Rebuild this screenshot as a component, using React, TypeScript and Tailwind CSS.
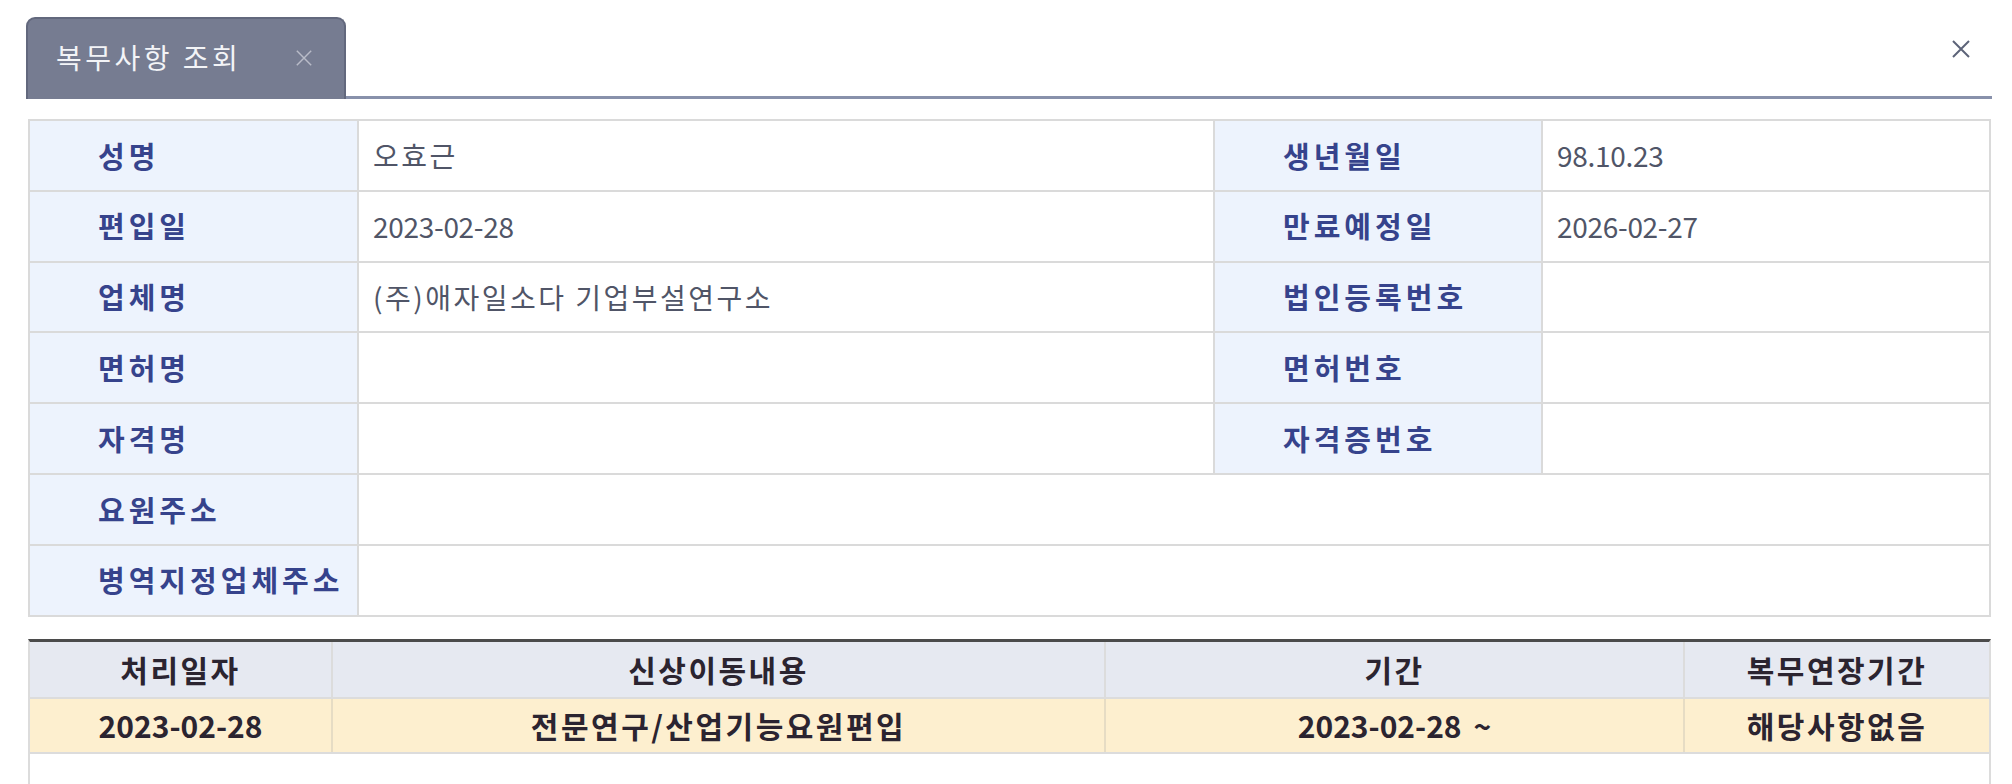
import React from "react";

const labelCls =
  "bg-[#edf3fd] flex items-center pl-[68px] text-[29px] font-bold tracking-[4px] text-[#36438c] whitespace-nowrap";
const valueCls =
  "bg-white flex items-center pl-[14px] text-[28px] text-[#505567] whitespace-nowrap";

function XIcon({ size, color, stroke }: { size: number; color: string; stroke: number }) {
  return (
    <svg width={size} height={size} viewBox="0 0 20 20" fill="none">
      <path d="M2 2 L18 18 M18 2 L2 18" stroke={color} strokeWidth={stroke} strokeLinecap="butt" />
    </svg>
  );
}

function Val({ text }: { text: string }) {
  const hasHangul = /[\uac00-\ud7a3]/.test(text);
  return <span className={hasHangul ? "tracking-[2.5px]" : "tracking-[-0.3px]"}>{text}</span>;
}

export default function App() {
  const rows: [string, string, string | null, string | null][] = [
    ["성명", "오효근", "생년월일", "98.10.23"],
    ["편입일", "2023-02-28", "만료예정일", "2026-02-27"],
    ["업체명", "(주)애자일소다 기업부설연구소", "법인등록번호", ""],
    ["면허명", "", "면허번호", ""],
    ["자격명", "", "자격증번호", ""],
    ["요원주소", "", null, null],
    ["병역지정업체주소", "", null, null],
  ];

  const hdr = "flex items-center justify-center tracking-[2.5px]";
  const cell = "flex items-center justify-center";

  return (
    <div
      className="w-[2012px] h-[784px] bg-white overflow-hidden flex flex-col"
      style={{ fontFamily: '"Noto Sans CJK KR", "Noto Sans", sans-serif' }}
    >
      {/* header with tab */}
      <div className="flex items-end pl-[26px] pr-[20px] pt-[17px] h-[99px] shrink-0">
        <div className="w-[320px] h-[82px] bg-[#767c91] border-2 border-b-0 border-[#62687d] rounded-t-[9px] flex items-center pl-[28px] pb-[4px]">
          <span className="text-[28px] tracking-[3.5px] text-[#f3f4f7]">복무사항 조회</span>
          <span className="ml-[54px] mt-[2px]">
            <XIcon size={18} color="#b9bcc8" stroke={1.6} />
          </span>
        </div>
        <div className="flex-1 h-full border-b-[3px] border-[#8891ab] flex items-center justify-end pr-[21px] pb-[16px]">
          <XIcon size={20} color="#5c6378" stroke={2} />
        </div>
      </div>

      {/* info table */}
      <div className="ml-[28px] mr-[21px] mt-[20px] bg-[#dadada] p-[2px] grid grid-cols-[327px_854px_326px_minmax(0,1fr)] gap-[2px] auto-rows-[68.8px] shrink-0">
        {rows.map(([l1, v1, l2, v2], i) =>
          l2 === null ? (
            <React.Fragment key={i}>
              <div className={labelCls}>{l1}</div>
              <div className={valueCls + " col-span-3"}>
                <Val text={v1} />
              </div>
            </React.Fragment>
          ) : (
            <React.Fragment key={i}>
              <div className={labelCls}>{l1}</div>
              <div className={valueCls}>
                <Val text={v1} />
              </div>
              <div className={labelCls + " pl-[66px]"}>{l2}</div>
              <div className={valueCls}>
                <Val text={v2 ?? ""} />
              </div>
            </React.Fragment>
          )
        )}
      </div>

      {/* history table */}
      <div className="ml-[28px] mr-[21px] mt-[22px] flex-1 border-t-[3px] border-t-[#4b4b4b] border-x-2 border-x-[#dcdcdc] flex flex-col">
        <div className="grid grid-cols-[303px_773px_579px_minmax(0,1fr)] h-[57px] bg-[#e6e9f1] border-b-2 border-[#dcdcdc] text-[30px] font-bold text-[#2b2430]">
          <div className={hdr + " border-r-2 border-[#dcdcdc]"}>처리일자</div>
          <div className={hdr + " border-r-2 border-[#dcdcdc]"}>신상이동내용</div>
          <div className={hdr + " border-r-2 border-[#dcdcdc]"}>기간</div>
          <div className={hdr}>복무연장기간</div>
        </div>
        <div className="grid grid-cols-[303px_773px_579px_minmax(0,1fr)] h-[55px] bg-[#fdefcf] border-b-2 border-[#dcdcdc] text-[30px] font-bold text-[#2b2430]">
          <div className={cell + " border-r-2 border-[#e6dcc4]"}>2023-02-28</div>
          <div className={hdr + " border-r-2 border-[#e6dcc4]"}>전문연구/산업기능요원편입</div>
          <div className={cell + " border-r-2 border-[#e6dcc4]"}>
            2023-02-28<span className="ml-[12px]">~</span>
          </div>
          <div className={hdr}>해당사항없음</div>
        </div>
        <div className="flex-1 bg-white" />
      </div>
    </div>
  );
}
